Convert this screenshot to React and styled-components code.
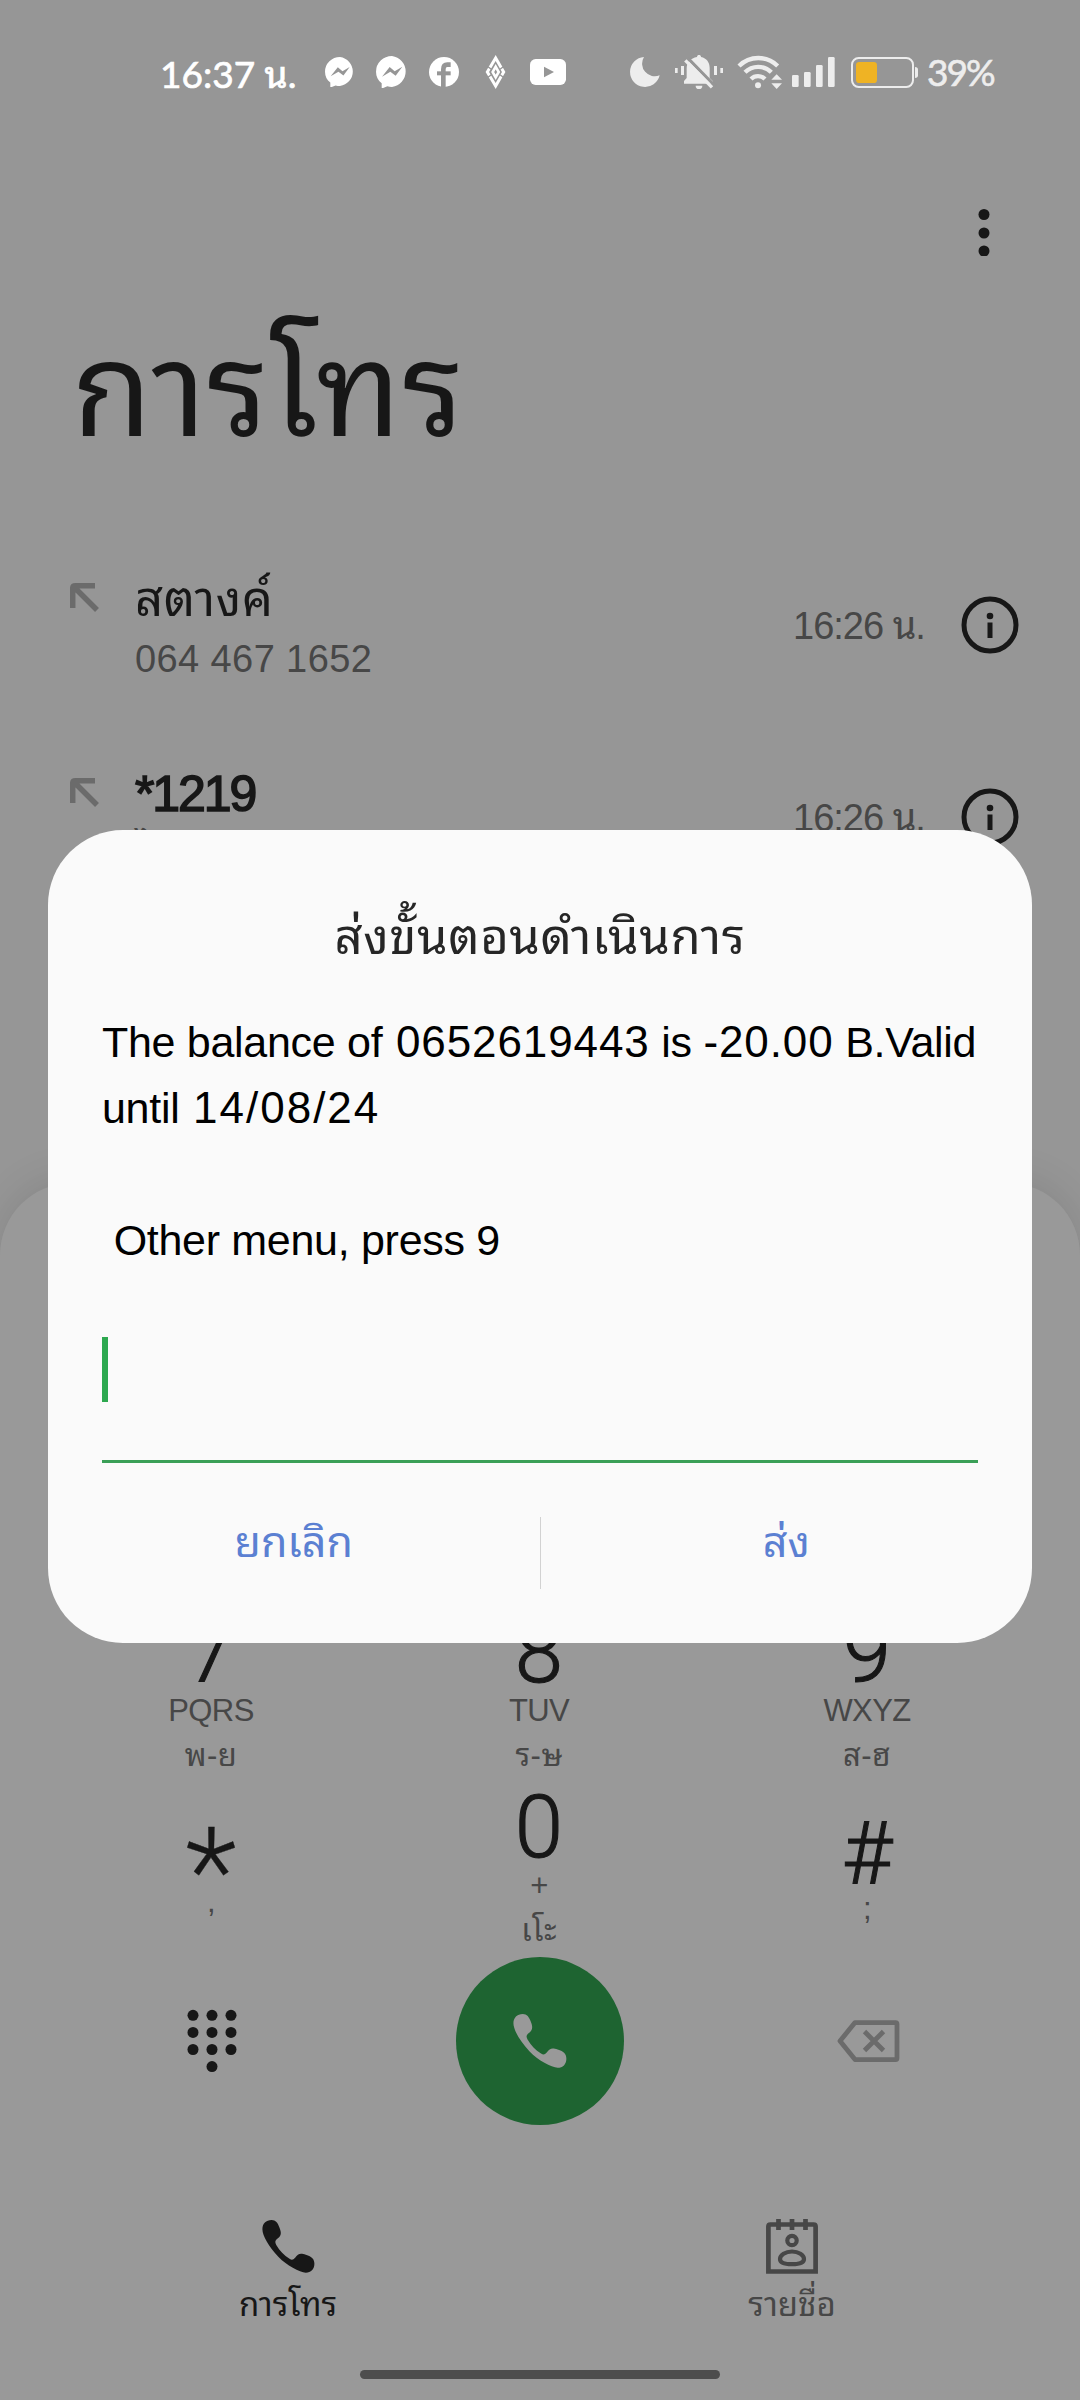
import styled, { createGlobalStyle } from "styled-components";

const GlobalStyle = createGlobalStyle`
  * {
    box-sizing: border-box;
  }
  body {
    margin: 0;
    background: #969696;
    font-family: "Liberation Sans", "Noto Sans Thai Looped", "Noto Sans Thai", "Noto Sans", sans-serif;
  }
  button {
    border: none;
    background: none;
    padding: 0;
    font: inherit;
    color: inherit;
  }
  svg {
    display: block;
    flex: none;
  }
`;

const Screen = styled.div`
  position: relative;
  display: flex;
  flex-direction: column;
  width: 1080px;
  height: 2400px;
  overflow: hidden;
  background: #969696;
  color: #171717;
`;

const StatusBar = styled.header`
  display: flex;
  align-items: center;
  height: 144px;
  padding-left: 160px;
  color: #fff;
`;

const Clock = styled.div`
  width: 165px;
  padding-top: 3px;
  font-family: Lato, "Noto Sans Thai Looped", "Noto Sans Thai", sans-serif;
  font-size: 37px;
  line-height: 50px;
  white-space: nowrap;
  -webkit-text-stroke: 0.7px currentColor;
`;

const StatusIcon = styled.div`
  margin-left: ${(p) => p.$gap || 0}px;
  color: ${(p) => (p.$dim ? "#ededed" : "#fff")};
`;

const BatteryText = styled.span`
  margin-left: 9px;
  color: #ededed;
  font-family: Lato, sans-serif;
  font-size: 37px;
  line-height: 50px;
  letter-spacing: -2px;
  -webkit-text-stroke: 0.6px currentColor;
`;

const TopBar = styled.div`
  display: flex;
  justify-content: flex-end;
  padding: 64px 80px 0 0;
`;

const PageTitle = styled.h1`
  margin: 0;
  padding: 55px 0 0 72px;
  height: 217px;
  font-size: 130px;
  font-weight: 400;
  line-height: 160px;
  letter-spacing: 1px;
`;

const CallList = styled.ul`
  flex: 1;
  margin: 0;
  padding: 56px 0 0;
  list-style: none;
`;

const CallRow = styled.li`
  display: flex;
  align-items: center;
  height: 192px;
  padding: 0 61px 0 70px;
`;

const CallInfo = styled.div`
  flex: 1;
  padding: ${(p) => (p.$unknown ? 11 : 11)}px 0 0 35px;
`;

const CallName = styled.div`
  font-size: ${(p) => (p.$unknown ? 50 : 49)}px;
  line-height: 56px;
  letter-spacing: ${(p) => (p.$unknown ? "-2.1px" : "0.6px")};
  -webkit-text-stroke: ${(p) => (p.$unknown ? "1.6px" : "0")} currentColor;
`;

const CallNumber = styled.div`
  color: #474747;
  font-size: 38px;
  line-height: ${(p) => (p.$unknown ? 58 : 64)}px;
  letter-spacing: 0.4px;
`;

const CallTime = styled.div`
  width: 168px;
  padding-top: 2px;
  color: #474747;
  font-size: 38px;
  line-height: 44px;
  letter-spacing: -1px;
  white-space: nowrap;
`;

const Sheet = styled.section`
  display: flex;
  flex-direction: column;
  height: 1217px;
  border-radius: 72px 72px 0 0;
  background: #999;
  box-shadow: 0 -4px 40px rgba(0, 0, 0, 0.1);
`;

const Keypad = styled.div`
  display: grid;
  grid-template-columns: 328px 328px 328px;
  grid-auto-rows: 175px;
  justify-content: center;
  height: 774px;
  margin-left: -2px;
  padding-top: 431px;
`;

const Key = styled.button`
  display: flex;
  flex-direction: column;
  align-items: center;
  justify-content: flex-start;
  padding-top: ${(p) => p.$drop || 0}px;
`;

const Digit = styled.span`
  font-family: Roboto, sans-serif;
  font-weight: 300;
  font-size: ${(p) => p.$size || 87}px;
  line-height: ${(p) => p.$line || 76}px;
  -webkit-text-stroke: ${(p) => (p.$size ? 0.3 : 1.1)}px currentColor;
`;

const Letters = styled.span`
  color: #474747;
  font-size: 31px;
  line-height: ${(p) => p.$line || 42}px;
  letter-spacing: -0.6px;
`;

const ThaiLetters = styled.span`
  color: #474747;
  font-size: 31px;
  line-height: 47px;
  letter-spacing: 0.4px;
`;

const KeypadActions = styled.div`
  display: grid;
  grid-template-columns: 328px 328px 328px;
  justify-content: center;
  align-items: center;
  justify-items: center;
  height: 168px;
`;

const CallButton = styled.button`
  display: flex;
  align-items: center;
  justify-content: center;
  width: 168px;
  height: 168px;
  border-radius: 50%;
  background: #1e6431;
  color: #999;
`;

const TabBar = styled.nav`
  display: grid;
  grid-template-columns: 504px 504px;
  justify-content: center;
  padding-top: 94px;
`;

const Tab = styled.button`
  display: flex;
  flex-direction: column;
  align-items: center;
  gap: 6px;
  color: ${(p) => (p.$active ? "#171717" : "#474747")};
  font-size: 33px;
  line-height: 50px;
`;

const TabIcon = styled.span`
  display: flex;
  align-items: center;
  height: 55px;
`;

const HomeBar = styled.div`
  width: 360px;
  height: 9px;
  margin: auto auto 21px;
  border-radius: 5px;
  background: #4d4d4d;
`;

const Dialog = styled.div`
  position: absolute;
  top: 830px;
  left: 48px;
  width: 984px;
  height: 813px;
  padding: 74px 54px 0;
  border-radius: 75px;
  background: #fafafa;
`;

const DialogTitle = styled.h2`
  margin: 0;
  color: #262626;
  font-size: 49px;
  font-weight: 400;
  line-height: 66px;
  letter-spacing: 0.6px;
  text-align: center;
`;

const Message = styled.p`
  margin: 39px 0 0;
  color: #000;
  font-size: 43px;
  line-height: 66px;
  letter-spacing: -0.3px;
  white-space: pre;
`;

const Amount = styled.span`
  margin-left: ${(p) => p.$shift || 0}px;
  font-size: 44px;
  letter-spacing: ${(p) => (p.$wide ? 2 : 0.9)}px;
`;

const Field = styled.div`
  display: flex;
  height: 158px;
  margin-top: 32px;
  padding-top: 32px;
  border-bottom: 3px solid #3a9f57;
`;

const Caret = styled.span`
  width: 6px;
  height: 65px;
  background: #2da84f;
`;

const DialogActions = styled.div`
  display: flex;
  align-items: flex-start;
  margin: 54px -54px 0;
`;

const DialogButton = styled.button`
  flex: 1;
  color: #5b80d2;
  font-size: 43px;
  line-height: 50px;
`;

const Divider = styled.span`
  width: 1px;
  height: 72px;
  background: #d2d2d2;
`;

const HANDSET =
  "M.4 9C.4 3.5 4 0 9.4 0c4.1 0 6.1 3 7.6 7 2.5 6 1.8 8.5-2 11.5-2.2 1.8-2.5 3.5-1 6 3.5 6 7.5 10 13 13.5 2.3 1.4 3.5 1.2 5.5-1 3-4 5-4.7 10.5-2.8 6 1.8 8.4 4.3 8.4 8.8 0 5.5-3.4 8.7-8.4 8.7C37 51.2 24 44.5 16 36 7 26.5.4 15.5.4 9Z";

function PhoneIcon({ size }) {
  return (
    <svg width={size} height={size} viewBox="0 0 52 52" fill="currentColor">
      <path d={HANDSET} />
    </svg>
  );
}

function MessengerIcon({ size }) {
  return (
    <svg width={size} height={size * 1.02} viewBox="0 0 96 98">
      <path
        fill="#fff"
        d="M48 0a48 47 0 0 1 0 93c-5 0-10-1-14-2L17 98V82C6 74 0 61 0 47A48 47 0 0 1 48 0Z"
      />
      <path fill="#969696" d="M18 62l23-29 15 13 23-14-20 27-16-12Z" />
    </svg>
  );
}

function FacebookIcon() {
  return (
    <svg width="30" height="30" viewBox="867 51 90 90">
      <circle cx="912" cy="96" r="45" fill="#fff" />
      <g fill="none" stroke="#969696">
        <path strokeWidth="14" d="M910 142V88q0-14 12-14h10" />
        <path strokeWidth="12" d="M891 100h41" />
      </g>
    </svg>
  );
}

function DiamondIcon() {
  return (
    <svg width="21" height="34" viewBox="1036 45 63 102">
      <g fill="none" stroke="#fff">
        <path strokeWidth="9" d="M1068 54l24 42-24 42-25-42Z" />
        <path strokeWidth="8" d="M1068 80l9 16-9 16-9-16Z" />
      </g>
      <path stroke="#969696" strokeWidth="4" d="M1045 80l10 8M1091 80l-10 8M1045 112l10-8M1091 112l-10-8" />
    </svg>
  );
}

function YoutubeIcon() {
  return (
    <svg width="36" height="26" viewBox="1170 57 108 78">
      <rect x="1170" y="57" width="108" height="78" rx="17" fill="#fff" />
      <path fill="#969696" d="M1212 80l30 16-30 16Z" />
    </svg>
  );
}

function MoonIcon() {
  return (
    <svg width="30" height="30" viewBox="89 51 90 90" fill="currentColor">
      <path d="M131 51A45 45 0 1 0 178 106 38 38 0 0 1 131 51Z" />
    </svg>
  );
}

function MutedBellIcon() {
  return (
    <svg width="48" height="34" viewBox="225 45 144 102" fill="currentColor">
      <path d="M225 84h8v15h-8zM243 78h9v27h-9zM342 78h9v27h-9zM361 84h8v15h-8z" />
      <path d="M252 131v-8l8-9V86c0-19 12-31 31-35 0-8 12-8 12 0 17 4 26 16 26 33v30l9 9v8Z" />
      <path d="M287 137h20a10 10 0 0 1-20 0Z" />
      <path d="M262 53l84 86" stroke="#969696" strokeWidth="9" />
      <path d="M256 61l80 81" stroke="currentColor" strokeWidth="10" />
    </svg>
  );
}

function WifiIcon() {
  return (
    <svg width="45" height="34" viewBox="409 43 135 102" fill="currentColor">
      <circle cx="472" cy="134" r="9" />
      <g fill="none" stroke="currentColor" strokeWidth="13">
        <path d="M415 76a82 82 0 0 1 116 0" />
        <path d="M433 95a56 56 0 0 1 79 0" />
        <path d="M451 115a30 30 0 0 1 42 0" />
      </g>
      <path d="M512 117l16-16 16 16ZM512 128l16 17 16-17Z" />
    </svg>
  );
}

function SignalIcon() {
  return (
    <svg width="43" height="30" viewBox="577 51 129 90" fill="currentColor">
      <rect x="577" y="105" width="20" height="36" rx="4" />
      <rect x="613" y="96" width="20" height="45" rx="4" />
      <rect x="649" y="75" width="20" height="66" rx="4" />
      <rect x="685" y="51" width="20" height="90" rx="4" />
    </svg>
  );
}

function BatteryIcon() {
  return (
    <svg width="67" height="31" viewBox="753 51 201 93">
      <rect x="756" y="54" width="183" height="87" rx="20" fill="none" stroke="#ededed" strokeWidth="6" />
      <rect x="768" y="66" width="63" height="63" rx="10" fill="#efb324" />
      <path fill="#ededed" d="M945 81q9 0 9 8v17q0 8-9 8Z" />
    </svg>
  );
}

function MoreIcon() {
  return (
    <svg width="32" height="48" viewBox="0 0 32 48" fill="#171717">
      <circle cx="16" cy="6.5" r="5.5" />
      <circle cx="16" cy="25" r="5.5" />
      <circle cx="16" cy="43" r="5.5" />
    </svg>
  );
}

const ArrowIcon = styled.svg`
  align-self: flex-start;
  margin-top: ${(p) => p.$top}px;
`;

function IncomingArrow({ top }) {
  return (
    <ArrowIcon $top={top} width="30" height="30" viewBox="0 0 30 30" fill="none" stroke="#6b6b6b" strokeWidth="5.5">
      <path d="M2.7 25V5.5q0-2.7 2.7-2.7H25M4 4l23 23" />
    </ArrowIcon>
  );
}

function InfoIcon() {
  return (
    <svg width="58" height="58" viewBox="0 0 58 58">
      <circle cx="29" cy="29" r="26" fill="none" stroke="#171717" strokeWidth="5" />
      <circle cx="29" cy="20" r="3.3" fill="#171717" />
      <path d="M29 26.5v15.5" stroke="#171717" strokeWidth="5" />
    </svg>
  );
}

function KeypadIcon() {
  const dots = [[0, 0], [1, 0], [2, 0], [0, 1], [1, 1], [2, 1], [0, 2], [1, 2], [2, 2], [1, 3]];
  return (
    <svg width="50" height="64" viewBox="0 0 50 64" fill="#171717">
      {dots.map(([x, y]) => (
        <circle key={`${x}-${y}`} cx={6 + x * 19} cy={6.3 + y * 17.1} r="5.5" />
      ))}
    </svg>
  );
}

function BackspaceIcon() {
  return (
    <svg width="63" height="42" viewBox="0 0 63 42" fill="none" stroke="#6b6b6b" strokeWidth="4.8">
      <path strokeLinejoin="round" d="M18 2.6h40.5q1.5 0 1.5 1.5v34q0 1.5-1.5 1.5H18L3 21Z" />
      <path d="M27.5 11.5l19 19M46.5 11.5l-19 19" />
    </svg>
  );
}

function ContactsIcon() {
  return (
    <svg width="52" height="55" viewBox="0 0 52 55" fill="none" stroke="currentColor" strokeWidth="4.7">
      <path d="M2.4 52.5V7.5q0-2 2-2h43.2q2 0 2 2v45Z" />
      <path d="M12.5 0v11M26 0v11M39.5 0v11" />
      <circle cx="26" cy="21.5" r="4.7" strokeWidth="4.2" />
      <path strokeWidth="4.2" d="M14 40c0-4 5.5-7.5 12-7.5S38 36 38 40s-5 5.2-12 5.2S14 44 14 40Z" />
    </svg>
  );
}

const calls = [
  { name: "สตางค์", number: "064 467 1652", time: "16:26 น." },
  { name: "*1219", number: "ไทย", time: "16:26 น.", unknown: true },
];

const keys = [
  { digit: "7", letters: "PQRS", thai: "พ-ย" },
  { digit: "8", letters: "TUV", thai: "ร-ษ" },
  { digit: "9", letters: "WXYZ", thai: "ส-ฮ" },
  { digit: "*", letters: ",", drop: 74, size: 120, line: 18 },
  { digit: "0", letters: "+", thai: "เโะ" },
  { digit: "#", letters: ";", drop: 26, lettersLine: 36 },
];

function App() {
  return (
    <>
      <GlobalStyle />
      <Screen>
        <StatusBar>
          <Clock>16:37 น.</Clock>
          <StatusIcon><MessengerIcon size={30} /></StatusIcon>
          <StatusIcon $gap={21}><MessengerIcon size={32} /></StatusIcon>
          <StatusIcon $gap={21}><FacebookIcon /></StatusIcon>
          <StatusIcon $gap={26}><DiamondIcon /></StatusIcon>
          <StatusIcon $gap={24}><YoutubeIcon /></StatusIcon>
          <StatusIcon $dim $gap={64}><MoonIcon /></StatusIcon>
          <StatusIcon $dim $gap={15}><MutedBellIcon /></StatusIcon>
          <StatusIcon $dim $gap={14}><WifiIcon /></StatusIcon>
          <StatusIcon $dim $gap={10}><SignalIcon /></StatusIcon>
          <StatusIcon $dim $gap={16}><BatteryIcon /></StatusIcon>
          <BatteryText>39%</BatteryText>
        </StatusBar>

        <TopBar>
          <button><MoreIcon /></button>
        </TopBar>

        <PageTitle>การโทร</PageTitle>

        <CallList>
          {calls.map((call, i) => (
            <CallRow key={call.name}>
              <IncomingArrow top={54 + i * 3} />
              <CallInfo $unknown={call.unknown}>
                <CallName $unknown={call.unknown}>{call.name}</CallName>
                <CallNumber $unknown={call.unknown}>{call.number}</CallNumber>
              </CallInfo>
              <CallTime>{call.time}</CallTime>
              <InfoIcon />
            </CallRow>
          ))}
        </CallList>

        <Sheet>
          <Keypad>
            {keys.map((key) => (
              <Key key={key.digit} $drop={key.drop}>
                <Digit $size={key.size} $line={key.line}>{key.digit}</Digit>
                <Letters $line={key.lettersLine}>{key.letters}</Letters>
                {key.thai && <ThaiLetters>{key.thai}</ThaiLetters>}
              </Key>
            ))}
          </Keypad>

          <KeypadActions>
            <KeypadIcon />
            <CallButton><PhoneIcon size={54} /></CallButton>
            <BackspaceIcon />
          </KeypadActions>

          <TabBar>
            <Tab $active>
              <TabIcon><PhoneIcon size={53} /></TabIcon>
              การโทร
            </Tab>
            <Tab>
              <TabIcon><ContactsIcon /></TabIcon>
              รายชื่อ
            </Tab>
          </TabBar>
          <HomeBar />
        </Sheet>

        <Dialog role="dialog">
          <DialogTitle>ส่งขั้นตอนดำเนินการ</DialogTitle>
          <Message>
            The balance of <Amount $shift={2}>0652619443</Amount> is <Amount>-20.00</Amount> B.Valid{"\n"}
            until <Amount $wide $shift={2}>14/08/24</Amount>{"\n\n"}
            {" Other menu, press 9"}
          </Message>
          <Field>
            <Caret />
          </Field>
          <DialogActions>
            <DialogButton>ยกเลิก</DialogButton>
            <Divider />
            <DialogButton>ส่ง</DialogButton>
          </DialogActions>
        </Dialog>
      </Screen>
    </>
  );
}

export default App;
